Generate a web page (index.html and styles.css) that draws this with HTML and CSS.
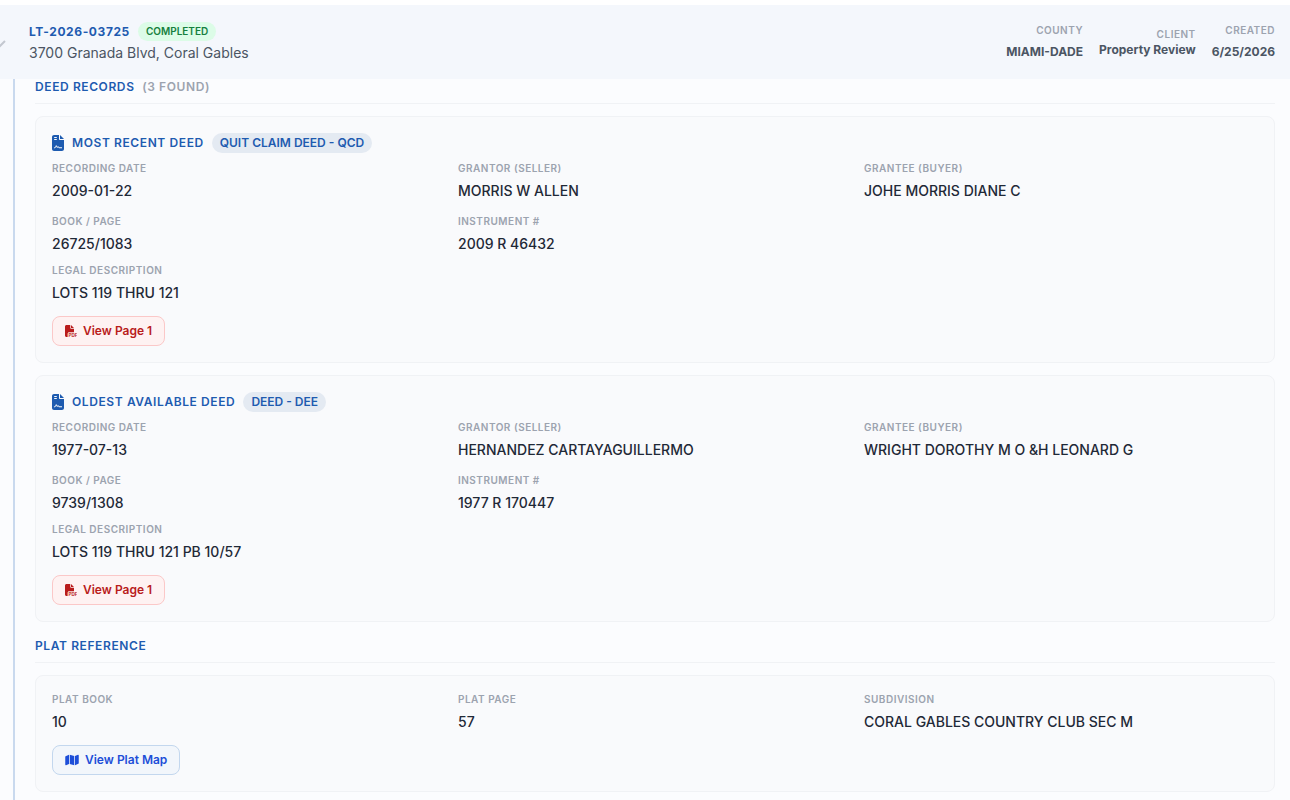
FILE: index.html
```html
<!DOCTYPE html>
<html lang="en">
<head>
    <meta charset="UTF-8">
    <meta name="viewport" content="width=device-width, initial-scale=1.0">
    <title>LT-2026-03725</title>
    <link rel="stylesheet" href="styles.css">
</head>
<body>
    <!-- shared icons -->
    <svg class="icon-defs" aria-hidden="true">
        <symbol id="icon-contract" viewBox="0 0 384 512">
            <path fill-rule="evenodd" d="M64 0C29 0 0 29 0 64v384c0 35 29 64 64 64h256c35 0 64-29 64-64V160H256c-18 0-32-14-32-32V0H64zM256 0v128h128L256 0zM80 64h64c9 0 16 7 16 16s-7 16-16 16H80c-9 0-16-7-16-16s7-16 16-16zm0 64h64c9 0 16 7 16 16s-7 16-16 16H80c-9 0-16-7-16-16s7-16 16-16z"/>
            <path d="M76 408h14c12 0 20-7 24-16l22-52 34 60 26-30 24 38h88" fill="none" stroke="#f9fafc" stroke-width="32" stroke-linecap="round" stroke-linejoin="round"/>
        </symbol>
        <symbol id="icon-pdf" viewBox="0 0 512 512">
            <path d="M0 64C0 29 29 0 64 0h160v128c0 18 14 32 32 32h128v144H176c-35 0-64 29-64 64v144H64c-35 0-64-29-64-64V64zm384 64H256V0l128 128z"/>
            <text x="146" y="506" font-size="196" font-weight="700">PDF</text>
        </symbol>
        <symbol id="icon-map" viewBox="0 0 576 512">
            <path d="M384 476L192 422V36l192 54v386zm32-1V88l127-51c16-6 33 5 33 22v335c0 10-6 19-15 22l-145 59zM15 95l145-58v387L33 475c-16 6-33-5-33-22V118c0-10 6-19 15-23z"/>
        </symbol>
    </svg>

    <header class="order-header">
        <svg class="chevron" viewBox="0 0 12 12" aria-hidden="true"><path d="M1 3l5 5 5-5"/></svg>
        <div class="order-info">
            <div class="order-top">
                <span class="order-id">LT-2026-03725</span>
                <span class="status">COMPLETED</span>
            </div>
            <div class="address">3700 Granada Blvd, Coral Gables</div>
        </div>
        <div class="order-meta">
            <div class="meta"><span class="meta-label">COUNTY</span><span class="meta-value">MIAMI-DADE</span></div>
            <div class="meta meta-tight"><span class="meta-label">CLIENT</span><span class="meta-value">Property Review</span></div>
            <div class="meta"><span class="meta-label">CREATED</span><span class="meta-value">6/25/2026</span></div>
        </div>
    </header>

    <main class="order-body">
        <section class="section">
            <h2 class="section-title">DEED RECORDS <span class="count">(3 FOUND)</span></h2>

            <article class="card">
                <div class="card-head">
                    <svg class="icon-doc" aria-hidden="true"><use href="#icon-contract"/></svg>
                    <h3 class="card-title">MOST RECENT DEED</h3>
                    <span class="tag">QUIT CLAIM DEED - QCD</span>
                </div>
                <dl class="fields">
                    <div><dt>RECORDING DATE</dt><dd>2009-01-22</dd></div>
                    <div><dt>GRANTOR (SELLER)</dt><dd>MORRIS W ALLEN</dd></div>
                    <div><dt>GRANTEE (BUYER)</dt><dd>JOHE MORRIS DIANE C</dd></div>
                    <div><dt>BOOK / PAGE</dt><dd>26725/1083</dd></div>
                    <div><dt>INSTRUMENT #</dt><dd>2009 R 46432</dd></div>
                </dl>
                <dl class="legal">
                    <div><dt>LEGAL DESCRIPTION</dt><dd>LOTS 119 THRU 121</dd></div>
                </dl>
                <button type="button" class="btn btn-pdf"><svg class="icon-pdf" aria-hidden="true"><use href="#icon-pdf"/></svg>View Page 1</button>
            </article>

            <article class="card">
                <div class="card-head">
                    <svg class="icon-doc" aria-hidden="true"><use href="#icon-contract"/></svg>
                    <h3 class="card-title">OLDEST AVAILABLE DEED</h3>
                    <span class="tag">DEED - DEE</span>
                </div>
                <dl class="fields">
                    <div><dt>RECORDING DATE</dt><dd>1977-07-13</dd></div>
                    <div><dt>GRANTOR (SELLER)</dt><dd>HERNANDEZ CARTAYAGUILLERMO</dd></div>
                    <div><dt>GRANTEE (BUYER)</dt><dd>WRIGHT DOROTHY M O &amp;H LEONARD G</dd></div>
                    <div><dt>BOOK / PAGE</dt><dd>9739/1308</dd></div>
                    <div><dt>INSTRUMENT #</dt><dd>1977 R 170447</dd></div>
                </dl>
                <dl class="legal">
                    <div><dt>LEGAL DESCRIPTION</dt><dd>LOTS 119 THRU 121 PB 10/57</dd></div>
                </dl>
                <button type="button" class="btn btn-pdf"><svg class="icon-pdf" aria-hidden="true"><use href="#icon-pdf"/></svg>View Page 1</button>
            </article>
        </section>

        <section class="section">
            <h2 class="section-title">PLAT REFERENCE</h2>
            <article class="card">
                <dl class="fields">
                    <div><dt>PLAT BOOK</dt><dd>10</dd></div>
                    <div><dt>PLAT PAGE</dt><dd>57</dd></div>
                    <div><dt>SUBDIVISION</dt><dd>CORAL GABLES COUNTRY CLUB SEC M</dd></div>
                </dl>
                <button type="button" class="btn btn-map"><svg class="icon-map" aria-hidden="true"><use href="#icon-map"/></svg>View Plat Map</button>
            </article>
        </section>
    </main>
</body>
</html>
```

FILE: styles.css
```css
* {
    box-sizing: border-box;
}
body {
    margin: 0;
    padding-top: 5px;
    background: #fff;
    color: #1f2937;
    font-family: Inter, "Liberation Sans", sans-serif;
    font-size: 14px;
    overflow-x: hidden;
}
h2, h3, dl, dd {
    margin: 0;
}
svg {
    fill: currentColor;
    flex-shrink: 0;
}
.icon-defs {
    display: none;
}

/* Order header */
.order-header {
    display: flex;
    align-items: center;
    min-height: 74px;
    padding-right: 15px;
    background: #f4f7fc;
}
.chevron {
    width: 12px;
    height: 12px;
    margin: 4px 23px 0 -6px;
    fill: none;
    stroke: #c3c8d0;
    stroke-width: 2;
}
.order-info {
    flex: 1;
}
.order-top {
    display: flex;
    align-items: center;
    gap: 8px;
}
.order-id {
    color: #1e5bb0;
    font-size: 12px;
    font-weight: 700;
    letter-spacing: 0.6px;
}
.status {
    padding: 0 8px;
    border-radius: 10px;
    background: #dcfce7;
    color: #15803d;
    font-size: 10px;
    font-weight: 600;
    line-height: 19px;
}
.address {
    margin-top: 1px;
    color: #4b5563;
    line-height: 21px;
}
.order-meta {
    display: flex;
    align-items: center;
    gap: 16px;
}
.meta {
    display: flex;
    flex-direction: column;
    align-items: flex-end;
    gap: 6px;
    padding-bottom: 2px;
}
.meta-tight {
    gap: 0;
    padding-bottom: 0;
}
.meta-label {
    color: #9ca3af;
    font-size: 10px;
    font-weight: 600;
    letter-spacing: 0.5px;
    line-height: 15px;
}
.meta-value {
    color: #4b5563;
    font-size: 12px;
    font-weight: 700;
    line-height: 16px;
}

/* Expanded details */
.order-body {
    margin-left: 13px;
    padding: 0 15px 16px 20px;
    border-left: 2px solid #c9d9ee;
    background: #fbfcfe;
    box-shadow: -13px 0 #fbfcfe;
}
.section + .section {
    margin-top: 16px;
}
.section-title {
    margin-bottom: 12px;
    padding-bottom: 8px;
    border-bottom: 1px solid #f0f2f5;
    color: #1e5bb0;
    font-size: 12px;
    font-weight: 600;
    letter-spacing: 0.6px;
    line-height: 16px;
}
.count {
    margin-left: 4px;
    color: #9ca3af;
}
.card {
    padding: 16px;
    border: 1px solid #f0f2f5;
    border-radius: 8px;
    background: #f9fafc;
}
.card + .card {
    margin-top: 12px;
}
.card-head {
    display: flex;
    align-items: center;
    gap: 8px;
    margin-bottom: 8px;
    color: #1e5bb0;
}
.icon-doc {
    width: 12px;
    height: 16px;
}
.card-title {
    font-size: 12px;
    font-weight: 600;
    letter-spacing: 0.6px;
    line-height: 20px;
}
.tag {
    padding: 0 8px;
    border-radius: 10px;
    background: #e4eaf2;
    font-size: 12px;
    font-weight: 600;
    line-height: 20px;
}
.fields {
    display: grid;
    grid-template-columns: repeat(3, 1fr);
    gap: 13px 12px;
}
.legal {
    margin-top: 9px;
}
dt {
    margin-bottom: 4px;
    color: #9ca3af;
    font-size: 10px;
    font-weight: 600;
    letter-spacing: 0.5px;
    line-height: 15px;
}
dd {
    font-size: 14px;
    font-weight: 500;
    line-height: 21px;
}

/* Buttons */
.btn {
    display: flex;
    align-items: center;
    gap: 6px;
    height: 30px;
    margin-top: 13px;
    padding: 0 12px;
    border: 1px solid;
    border-radius: 8px;
    font-family: inherit;
    font-size: 12px;
    font-weight: 600;
    line-height: 20px;
    cursor: pointer;
}
.btn-pdf {
    border-color: #fbc8c8;
    background: #fef2f2;
    color: #b91c1c;
}
.btn-map {
    border-color: #c3d7ee;
    background: #f2f6fb;
    color: #1d4ed8;
}
.icon-pdf {
    width: 12px;
    height: 12px;
}
.icon-map {
    width: 14px;
    height: 12px;
}
```
